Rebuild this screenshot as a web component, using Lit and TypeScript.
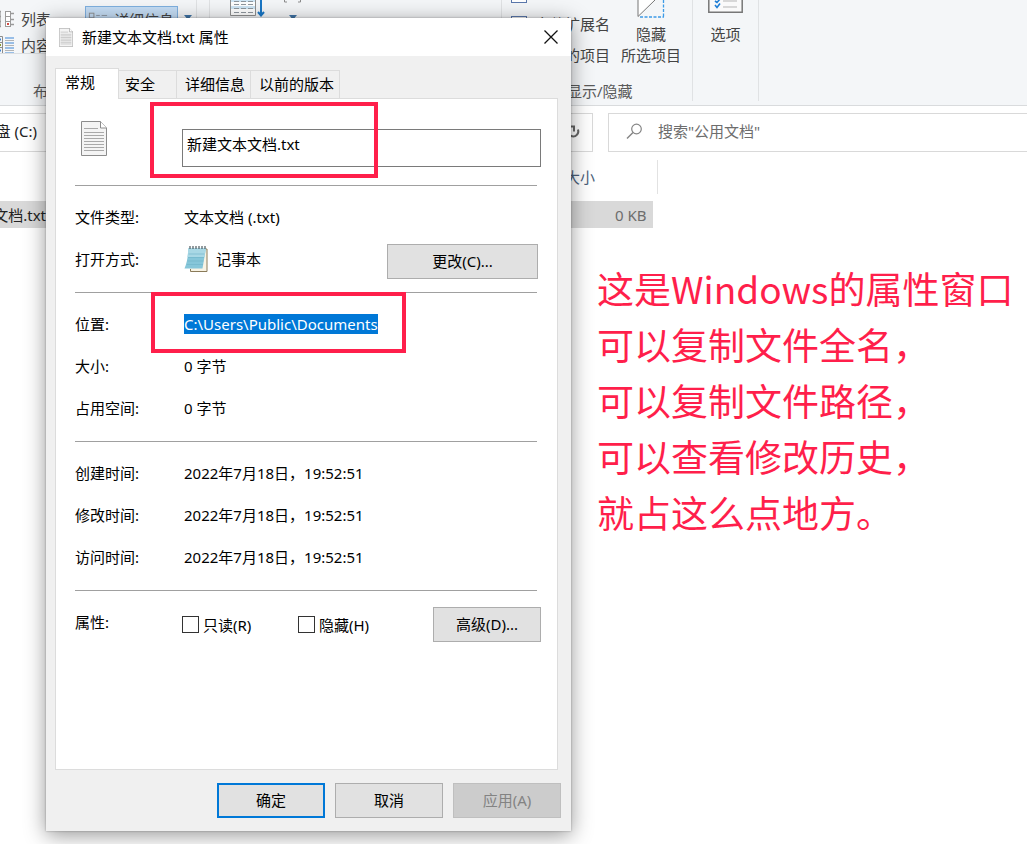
import { LitElement, html, css } from "lit";
import { customElement, property } from "lit/decorators.js";

const textFile = (cls: string) => html`<svg class=${cls} viewBox="0 0 26 35" fill="none" aria-hidden="true">
  <path d="M.5 .5H19.5L25.5 7V34.5H.5Z" fill="#f4f4f4" stroke="#8c8c8c" />
  <path d="M19.5 .5V7H25.5" fill="#fff" stroke="#8c8c8c" />
  <path d="M3 7.5H17M3 11.5H23M3 14.5H23M3 17.5H23M3 20.5H23M3 23.5H23M3 26.5H23M3 29.5H23" stroke="#a9a9a9" />
</svg>`;

const notepad = html`<svg class="notepad" viewBox="0 0 24 28" aria-hidden="true">
  <path d="M6 4H23V26.5H6.500V24" fill="#f8f3e4" stroke="#8a7a58" />
  <path d="M4.500 3H22L18.500 23.500H0.500C3 18 4 11 4.500 3Z" fill="#86c6d9" />
  <path d="M4.500 3H22L20.500 12H3.500Z" fill="#a9d8e5" />
  <path d="M4.5 9H20.5M4 12.5H20M3.5 16H19.5M2.8 19.5H19" stroke="#6fb3c8" stroke-width=".6" fill="none" />
  <path d="M6 1V4M9 1V4M12 1V4M15 1V4M18 1V4M21 1V4" stroke="#4d5a60" stroke-width="1.2" />
</svg>`;

const listIcon = html`<svg class="view-icon" viewBox="0 0 18 18" fill="none" aria-hidden="true">
  <path d="M4 1.500V16.500M3 1.500H5M3 6.500H5M3 11.500H5M3 16.500H5M14 3.500H18M14 9.500H18M14 14.5H18" stroke="#9a9a9a" stroke-width="1.3" />
  <rect x="9.5" y="1.5" width="5" height="15" fill="#fff" stroke="#9a9a9a" />
  <path d="M9.5 6.5H14.5M9.5 11.5H14.5" stroke="#9a9a9a" />
  <rect x="11" y="13" width="2" height="2" fill="#d24a43" />
</svg>`;

const contentIcon = html`<svg class="view-icon" viewBox="0 0 18 18" fill="none" aria-hidden="true">
  <path d="M0 .5H6.500V17.500H0M0 6.5H6.5M0 11.5H6.5" stroke="#8c8c8c" />
  <rect x="3" y="8" width="2" height="2" fill="#8a9a2c" />
  <path d="M3 3.500H5M3 14.500H5" stroke="#3d86d6" stroke-width="2" />
  <path d="M9 2H18M9 7H18M9 12H18M9 17H18" stroke="#3d86d6" stroke-width="1.2" />
  <path d="M9 4.5H18M9 9.5H18M9 14.500H18" stroke="#b4b4b4" />
</svg>`;

const detailsIcon = html`<svg class="details-icon" viewBox="0 0 22 16" fill="none" aria-hidden="true">
  <rect x="1.5" y=".5" width="5" height="15" stroke="#8c8c8c" />
  <path d="M1.5 5.5H6.5M1.5 10.5H6.5M9 3H13M15 3H21M9 8H13M15 8H21M9 13H13M15 13H21" stroke="#8a93a0" />
</svg>`;

const sortIcon = html`<svg class="sort-icon" viewBox="0 0 36 17" fill="none" aria-hidden="true">
  <path d="M.5 0V15.500H25.500V0" fill="#fff" stroke="#8f8f8f" />
  <path d="M1 .5H25M1 7.500H25" stroke="#cfe6f5" stroke-width="3" />
  <path d="M4 1.500H23M4 4.500H23M4 8.500H23M4 12.500H23" stroke="#8f979e" stroke-dasharray="5 2" />
  <path d="M31 0V14M28 12L31 15.500L34 12" stroke="#1976c5" stroke-width="2" />
</svg>`;

const hideIcon = html`<svg class="hide-icon" viewBox="0 0 28 18" fill="none" aria-hidden="true">
  <path d="M1 0V16.500L18 0" fill="#fff" stroke="#777" />
  <path d="M3 17H27M26.500 0V17" stroke="#3d9be6" stroke-width="1.300" stroke-dasharray="3 1.500" />
</svg>`;

const optionsIcon = html`<svg class="options-icon" viewBox="0 0 35 14" fill="none" aria-hidden="true">
  <path d="M.8 0V12.200H34.200V0" fill="#fafafa" stroke="#777" stroke-width="1.500" />
  <path d="M15 1H29M15 7H29" stroke="#b5b5b5" />
  <path d="M7 1L9 2.500L12 -1M7 5L9 7.500L12 3.500" stroke="#1f7fd6" stroke-width="1.600" />
</svg>`;

const caret = html`<svg class="caret" viewBox="0 0 8 5" aria-hidden="true"><path d="M0 0H8L4 5Z" fill="#3f73a5" /></svg>`;

@customElement("explorer-window")
export class ExplorerWindow extends LitElement {
  static styles = css`
    :host { display: block; color: #444; }
    * { box-sizing: border-box; }
    button, input { font: inherit; color: inherit; border: 0; background: none; padding: 0; margin: 0; }
    svg { display: block; flex: none; }
    .ribbon { display: flex; height: 106px; overflow: hidden; background: #f4f6f8; border-bottom: 1px solid #d9dbdd; line-height: 20px; }
    .group { display: flex; flex: none; position: relative; border-right: 1px solid #e0e2e4; margin-bottom: 4px; }
    .group-name { position: absolute; bottom: 0; color: #5a5a5a; white-space: nowrap; }
    .layout { width: 210px; }
    .layout .group-name { left: 33px; }
    .views { display: flex; flex-direction: column; gap: 6px; padding-top: 9px; width: 85px; height: 54px; overflow: hidden; border-bottom: 1px solid #dcdfe2; }
    .view { display: flex; align-items: center; gap: 7px; margin-left: -4px; white-space: nowrap; }
    .view-icon { width: 18px; height: 18px; }
    .chosen { display: flex; align-items: center; gap: 6px; width: 93px; height: 28px; margin-top: 6px; padding: 0 2px; overflow: hidden; white-space: nowrap; background: #c5ddf5; border: 1px solid #7fb0e0; }
    .details-icon { width: 20px; height: 16px; }
    .caret { width: 8px; height: 5px; }
    .arrow { width: 19px; padding-top: 15px; padding-left: 6px; height: 54px; border-right: 1px solid #e0e2e4; }
    .current { width: 292px; gap: 18px; padding-left: 20px; }
    .sort-icon { width: 36px; height: 17px; }
    .add { display: grid; grid-template-columns: 17px auto; column-gap: 6px; align-content: start; }
    .add .caret { justify-self: center; margin-top: 12px; }
    .add span { margin-top: 12px; }
    .column-icon { width: 17px; height: 3px; grid-column: 1 / 3; }
    .visibility { width: 191px; }
    .visibility .group-name { left: 65px; }
    .checks { display: flex; flex-direction: column; gap: 11px; width: 108px; margin-top: -14px; white-space: nowrap; }
    .checks label { display: flex; justify-content: flex-end; align-items: center; gap: 8px; height: 20px; }
    .checks input { appearance: none; width: 16px; height: 16px; border: 1px solid #5b78ad; background: #fff; flex: none; }
    .checks .flag { justify-content: flex-start; padding-left: 9px; height: 17px; }
    .big { display: flex; flex-direction: column; align-items: center; flex: 1; line-height: 21px; white-space: nowrap; }
    .hide-icon { width: 28px; height: 18px; margin-bottom: 6px; }
    .options-icon { width: 35px; height: 14px; margin-bottom: 10px; }
    .options { width: 66px; }
    .address { display: flex; gap: 15px; padding-top: 7px; height: 46px; }
    .path { display: flex; align-items: center; justify-content: space-between; width: 593px; flex: none; border: 1px solid #d9d9d9; border-left: 0; padding: 0 11px 3px 0; color: #222; }
    .drive { display: flex; overflow: hidden; width: 37px; justify-content: flex-end; white-space: nowrap; }
    .reload, .reload svg { width: 16px; height: 16px; }
    .search { display: flex; align-items: center; gap: 15px; flex: 1; padding: 0 0 3px 17px; border: 1px solid #d9d9d9; border-right: 0; }
    .search svg { width: 17px; height: 17px; }
    .search input { flex: 1; min-width: 0; outline: 0; }
    .search input::placeholder { color: #6d6d6d; opacity: 1; }
    .files { border-collapse: collapse; table-layout: fixed; width: 658px; margin-top: 8px; }
    .files th { height: 34px; padding: 0; text-align: left; font-weight: 400; color: #4c607a; border-right: 1px solid #e2e2e2; }
    .files th:first-child { border-right: 0; }
    .files td { padding: 0; }
    .name-col { width: 565px; }
    .file-row td { padding-top: 7px; }
    .cell { display: flex; height: 27px; align-items: center; background: #d9d9d9; white-space: nowrap; color: #222; }
    .clip { display: flex; width: 46px; justify-content: flex-end; overflow: hidden; }
    .size { justify-content: flex-end; margin-right: 5px; padding-right: 6px; color: #6d6d6d; }
  `;
  render() {
    return html`
      <div class="ribbon">
        <div class="group layout">
          <div class="views">
            <button class="view">${listIcon}列表</button>
            <button class="view">${contentIcon}内容</button>
          </div>
          <button class="chosen">${detailsIcon}详细信息</button>
          <div class="arrow">${caret}</div>
          <span class="group-name">布局</span>
        </div>
        <div class="group current">
          ${sortIcon}
          <button class="add">
            <svg class="column-icon" viewBox="0 0 17 3" fill="none" aria-hidden="true"><path d="M.5 0V2H3M16.500 0V2H14" stroke="#8c8c8c" /></svg>
            ${caret}<span>添加列</span>
          </button>
        </div>
        <div class="group visibility">
          <div class="checks">
            <label class="flag"><input type="checkbox" aria-label="项目复选框" /></label>
            <label><input type="checkbox" />文件扩展名</label>
            <label><input type="checkbox" />隐藏的项目</label>
          </div>
          <button class="big">${hideIcon}<span>隐藏</span><span>所选项目</span></button>
          <span class="group-name">显示/隐藏</span>
        </div>
        <div class="group options">
          <button class="big">${optionsIcon}<span>选项</span></button>
        </div>
      </div>
      <div class="address">
        <div class="path">
          <span class="drive">本地磁盘 (C:)</span>
          <button class="reload" aria-label="刷新"><svg viewBox="0 0 16 16" fill="none" aria-hidden="true"><path d="M13 6.500A5.200 5.200 0 1 1 4 5" stroke="#666" stroke-width="2" /><path d="M4 3.500H9V8.500" stroke="#666" stroke-width="2" /></svg></button>
        </div>
        <label class="search">
          <svg viewBox="0 0 17 17" fill="none" aria-hidden="true"><circle cx="10.500" cy="6" r="4.800" stroke="#858585" stroke-width="1.200" /><path d="M7 9.500L1 15.500" stroke="#858585" stroke-width="1.500" /></svg>
          <input type="search" aria-label="搜索" placeholder='搜索"公用文档"' />
        </label>
      </div>
      <table class="files">
        <colgroup><col class="name-col" /><col /></colgroup>
        <thead><tr><th></th><th>大小</th></tr></thead>
        <tbody><tr class="file-row">
          <td><div class="cell"><span class="clip">新建文本文档.txt</span></div></td>
          <td><div class="cell size">0 KB</div></td>
        </tr></tbody>
      </table>`;
  }
}

@customElement("property-dialog")
export class PropertyDialog extends LitElement {
  @property() fileName = "新建文本文档.txt";
  static styles = css`
    :host { display: block; background: #f0f0f0; color: #000; box-shadow: 0 4px 20px rgba(0, 0, 0, .42), 0 0 2px rgba(0, 0, 0, .3); }
    * { box-sizing: border-box; }
    button, input { font: inherit; color: inherit; margin: 0; }
    svg { display: block; flex: none; }
    .title { display: flex; align-items: center; gap: 9px; height: 38px; padding: 0 13px; background: #fff; }
    .title span { flex: 1; }
    .title-icon { width: 14px; height: 19px; }
    .close { border: 0; background: none; padding: 0; }
    .close svg { width: 14px; height: 14px; }
    .tabs { display: flex; align-items: flex-end; padding: 12px 9px 0; }
    .tab { height: 28px; padding: 0 5px 2px 8px; border: 1px solid #dcdcdc; border-left: 0; border-bottom: 0; background: #f0f0f0; white-space: nowrap; }
    .tab:nth-child(2) { padding: 0 21px 2px 6px; }
    .tab.active { height: 31px; margin-bottom: -1px; padding: 0 23px 4px 9px; border-left: 1px solid #dcdcdc; background: #fff; position: relative; }
    .panel { margin: 0 13px 0 9px; padding: 0 20px 127px 19px; background: #fff; border: 1px solid #dcdcdc; }
    .head { display: grid; grid-template-columns: 107px 1fr; align-items: start; padding: 21px 0 18px; margin-right: -4px; }
    .head .file-icon { width: 26px; height: 35px; margin: 1px 0 0 6px; }
    .name { width: 100%; height: 38px; margin-top: 9px; padding: 0 4px 10px; border: 1px solid #7a7a7a; background: #fff; outline: 0; }
    .section { margin: 0; padding: 10px 0 12px; border-top: 1px solid #a0a0a0; }
    .row { display: grid; grid-template-columns: 109px 1fr; align-items: center; height: 42px; }
    dt, dd { margin: 0; }
    .app { display: flex; align-items: center; }
    .app span { flex: 1; padding-left: 8px; }
    .notepad { width: 24px; height: 28px; }
    .btn { height: 35px; padding: 0 0 2px; border: 1px solid #adadad; background: #e1e1e1; white-space: nowrap; }
    .change { width: 151px; margin: 5px -1px 0 0; }
    .selected { background: #0078d7; color: #fff; }
    .attributes { border-top: 1px solid #a0a0a0; padding-top: 16px; }
    .flags { display: flex; align-items: center; margin-right: -4px; }
    .label { width: 107px; padding-bottom: 5px; }
    .check { display: flex; align-items: center; gap: 4px; width: 116px; }
    .check input { appearance: none; width: 17px; height: 17px; border: 1px solid #333; background: #fff; }
    .advanced { width: 108px; margin-left: auto; }
    .footer { display: flex; justify-content: flex-end; gap: 10px; padding: 13px 10px; }
    .footer .btn { width: 108px; }
    .footer .primary { border: 2px solid #0078d7; }
    .btn:disabled { background: #ccc; border-color: #bfbfbf; color: #838383; }
  `;
  private row(label: string, value: unknown) {
    return html`<div class="row"><dt>${label}</dt><dd>${value}</dd></div>`;
  }
  render() {
    return html`
      <header class="title">
        ${textFile("title-icon")}<span>${this.fileName} 属性</span>
        <button class="close" aria-label="关闭"><svg viewBox="0 0 14 14" aria-hidden="true"><path d="M.5 .5L13.500 13.500M13.500 .5L.5 13.500" stroke="#111" stroke-width="1.300" /></svg></button>
      </header>
      <nav class="tabs" role="tablist">
        <button class="tab active" role="tab" aria-selected="true">常规</button>
        <button class="tab" role="tab">安全</button>
        <button class="tab" role="tab">详细信息</button>
        <button class="tab" role="tab">以前的版本</button>
      </nav>
      <section class="panel">
        <div class="head">
          ${textFile("file-icon")}
          <input class="name" type="text" aria-label="文件名" .value=${this.fileName} />
        </div>
        <dl class="section">
          ${this.row("文件类型:", "文本文档 (.txt)")}
          ${this.row("打开方式:", html`<div class="app">${notepad}<span>记事本</span><button class="btn change">更改(C)...</button></div>`)}
        </dl>
        <dl class="section">
          ${this.row("位置:", html`<span class="selected">C:\\Users\\Public\\Documents</span>`)}
          ${this.row("大小:", "0 字节")}
          ${this.row("占用空间:", "0 字节")}
        </dl>
        <dl class="section">
          ${["创建时间:", "修改时间:", "访问时间:"].map((l) => this.row(l, "2022年7月18日，19:52:51"))}
        </dl>
        <div class="attributes">
          <div class="flags">
            <span class="label">属性:</span>
            <label class="check"><input type="checkbox" />只读(R)</label>
            <label class="check"><input type="checkbox" />隐藏(H)</label>
            <button class="btn advanced">高级(D)...</button>
          </div>
        </div>
      </section>
      <footer class="footer">
        <button class="btn primary">确定</button>
        <button class="btn">取消</button>
        <button class="btn" disabled>应用(A)</button>
      </footer>`;
  }
}

@customElement("app-root")
export class AppRoot extends LitElement {
  static styles = css`
    :host { display: block; position: relative; min-height: 100vh; overflow: hidden; background: #fff; font: 15px/20px "Noto Sans", "Noto Sans CJK SC", sans-serif; }
    .dialog { position: absolute; left: 46px; top: 18px; width: 525px; }
    .mark { position: absolute; box-sizing: border-box; border: 4px solid #ff1f4b; pointer-events: none; }
    .mark-name { left: 150px; top: 102px; width: 228px; height: 76px; }
    .mark-path { left: 151px; top: 292px; width: 255px; height: 61px; }
    .note { position: absolute; left: 597px; top: 260px; margin: 0; color: #ff1f4b; font: 37px/56px "Noto Sans CJK SC", sans-serif; white-space: nowrap; }
  `;
  render() {
    return html`
      <explorer-window></explorer-window>
      <property-dialog class="dialog"></property-dialog>
      <div class="mark mark-name"></div>
      <div class="mark mark-path"></div>
      <p class="note">这是Windows的属性窗口<br />可以复制文件全名，<br />可以复制文件路径，<br />可以查看修改历史，<br />就占这么点地方。</p>`;
  }
}
